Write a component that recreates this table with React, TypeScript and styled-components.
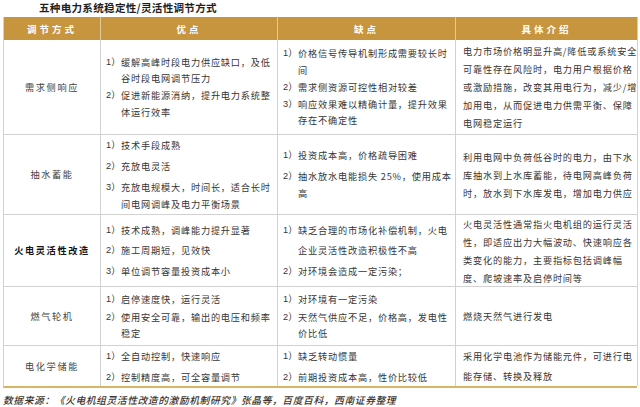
import React from "react";
import styled, { createGlobalStyle } from "styled-components";

const GlobalStyle = createGlobalStyle`
  html, body {
    margin: 0;
    padding: 0;
    background: #ffffff;
  }
  body {
    font-family: "Noto Sans CJK SC", "Liberation Sans", sans-serif;
  }
`;

const Page = styled.div`
  width: 640px;
  height: 407px;
  padding: 0 3px;
  box-sizing: border-box;
  overflow: hidden;
  background: #fff;
`;

const Title = styled.div`
  height: 17px;
  line-height: 16px;
  padding-left: 36px;
  font-size: 10.6px;
  font-weight: 700;
  letter-spacing: 0.25px;
  color: #1f1f1f;
`;

const Table = styled.div`
  display: grid;
  grid-template-columns: 97px 177px 178px 182px;
  border-left: 1px solid #d2d2d2;
  border-bottom: 2px solid #d8b468;
`;

const HeadCell = styled.div`
  height: 23px;
  display: flex;
  align-items: center;
  justify-content: center;
  background: #c8953f;
  color: #ffffff;
  font-size: 9.5px;
  font-weight: 700;
  letter-spacing: 3px;
  border-right: 1px solid #e2c89a;
  &:last-of-type {
    border-right: none;
  }
`;

interface CellProps {
  $h: number;
  $lh: number;
  $gap: number;
  $last?: boolean;
}

const Cell = styled.div<CellProps>`
  height: ${({ $h }) => $h}px;
  box-sizing: border-box;
  display: flex;
  flex-direction: column;
  justify-content: center;
  gap: ${({ $gap }) => $gap}px;
  padding: 0 0 0 5px;
  border-right: 1px solid #d2d2d2;
  border-bottom: ${({ $last }) => ($last ? "none" : "1px solid #d2d2d2")};
  font-size: 9.2px;
  letter-spacing: 0.8px;
  line-height: ${({ $lh }) => $lh}px;
  color: #363636;
  white-space: nowrap;
  overflow: hidden;
`;

const NameCell = styled(Cell)<{ $bold?: boolean }>`
  align-items: center;
  padding: 0;
  letter-spacing: 1.6px;
  font-weight: ${({ $bold }) => ($bold ? 700 : 400)};
  color: ${({ $bold }) => ($bold ? "#111" : "#444")};
`;

const DescCell = styled(Cell)`
  padding-left: 7px;
`;

const Item = styled.div`
  display: flex;
`;

const Num = styled.span`
  width: 15px;
  flex-shrink: 0;
  letter-spacing: 0;
  font-family: "Liberation Sans", "Noto Sans CJK SC", sans-serif;
`;

const Lines = styled.div`
  display: flex;
  flex-direction: column;
`;

const Source = styled.div`
  margin-top: 5px;
  font-size: 9.8px;
  font-style: italic;
  font-weight: 500;
  letter-spacing: 0.55px;
  color: #3b332c;
`;

type Point = string[];

interface Row {
  name: string;
  bold?: boolean;
  h: number;
  lh: number;
  gap: number;
  pros: Point[];
  cons: Point[];
  desc: string[];
}

const rows: Row[] = [
  {
    name: "需求侧响应",
    h: 95,
    lh: 16.5,
    gap: 0.5,
    pros: [
      ["缓解高峰时段电力供应缺口，及低", "谷时段电网调节压力"],
      ["促进新能源消纳，提升电力系统整", "体运行效率"],
    ],
    cons: [
      ["价格信号传导机制形成需要较长时", "间"],
      ["需求侧资源可控性相对较差"],
      ["响应效果难以精确计量，提升效果", "存在不确定性"],
    ],
    desc: [
      "电力市场价格明显升高/降低或系统安全",
      "可靠性存在风险时，电力用户根据价格",
      "或激励措施，改变其用电行为，减少/增",
      "加用电，从而促进电力供需平衡、保障",
      "电网稳定运行",
    ],
  },
  {
    name: "抽水蓄能",
    h: 80,
    lh: 17,
    gap: 4,
    pros: [
      ["技术手段成熟"],
      ["充放电灵活"],
      ["充放电规模大，时间长，适合长时", "间电网调峰及电力平衡场景"],
    ],
    cons: [["投资成本高，价格疏导困难"], ["抽水放水电能损失 25%，使用成本", "高"]],
    desc: [
      "利用电网中负荷低谷时的电力，由下水",
      "库抽水到上水库蓄能，待电网高峰负荷",
      "时，放水到下水库发电，增加电力供应",
    ],
  },
  {
    name: "火电灵活性改造",
    bold: true,
    h: 72,
    lh: 20.5,
    gap: 0,
    pros: [["技术成熟，调峰能力提升显著"], ["施工周期短，见效快"], ["单位调节容量投资成本小"]],
    cons: [["缺乏合理的市场化补偿机制，火电", "企业灵活性改造积极性不高"], ["对环境会造成一定污染；"]],
    desc: [
      "火电灵活性通常指火电机组的运行灵活",
      "性，即适应出力大幅波动、快速响应各",
      "类变化的能力，主要指标包括调峰幅",
      "度、爬坡速率及启停时间等",
    ],
  },
  {
    name: "燃气轮机",
    h: 59,
    lh: 16,
    gap: 2,
    pros: [["启停速度快，运行灵活"], ["使用安全可靠，输出的电压和频率", "稳定"]],
    cons: [["对环境有一定污染"], ["天然气供应不足，价格高，发电性", "价比低"]],
    desc: ["燃烧天然气进行发电"],
  },
  {
    name: "电化学储能",
    h: 40,
    lh: 20,
    gap: 1,
    pros: [["全自动控制，快速响应"], ["控制精度高，可全容量调节"]],
    cons: [["缺乏转动惯量"], ["前期投资成本高，性价比较低"]],
    desc: ["采用化学电池作为储能元件，可进行电", "能存储、转换及释放"],
  },
];

const PointList: React.FC<{ points: Point[] }> = ({ points }) => (
  <>
    {points.map((lines, i) => (
      <Item key={i}>
        <Num>{i + 1}）</Num>
        <Lines>
          {lines.map((l, j) => (
            <span key={j}>{l}</span>
          ))}
        </Lines>
      </Item>
    ))}
  </>
);

const App: React.FC = () => {
  return (
    <Page>
      <GlobalStyle />
      <Title>五种电力系统稳定性/灵活性调节方式</Title>
      <Table>
        <HeadCell>调节方式</HeadCell>
        <HeadCell>优点</HeadCell>
        <HeadCell>缺点</HeadCell>
        <HeadCell>具体介绍</HeadCell>
        {rows.map((r, idx) => {
          const last = idx === rows.length - 1;
          const p = { $h: r.h, $lh: r.lh, $gap: r.gap, $last: last };
          return (
            <React.Fragment key={r.name}>
              <NameCell {...p} $bold={r.bold}>
                {r.name}
              </NameCell>
              <Cell {...p}>
                <PointList points={r.pros} />
              </Cell>
              <Cell {...p}>
                <PointList points={r.cons} />
              </Cell>
              <DescCell {...p} $gap={0} $lh={r.desc.length > 2 ? 18 : r.lh}>
                <Lines>
                  {r.desc.map((l, j) => (
                    <span key={j}>{l}</span>
                  ))}
                </Lines>
              </DescCell>
            </React.Fragment>
          );
        })}
      </Table>
      <Source>数据来源：《火电机组灵活性改造的激励机制研究》张晶等，百度百科，西南证券整理</Source>
    </Page>
  );
};

export default App;
